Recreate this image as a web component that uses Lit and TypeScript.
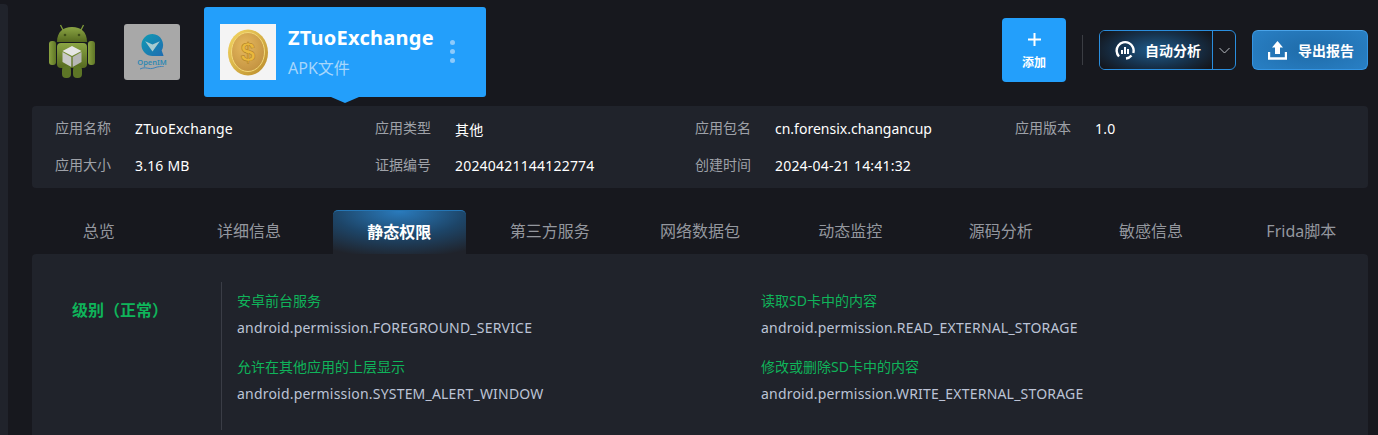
import { LitElement, html, css } from "lit";
import { customElement } from "lit/decorators.js";

const info = [
  ["应用名称", "ZTuoExchange"], ["应用类型", "其他"], ["应用包名", "cn.forensix.changancup"], ["应用版本", "1.0"],
  ["应用大小", "3.16 MB"], ["证据编号", "20240421144122774"], ["创建时间", "2024-04-21 14:41:32"],
];
const tabs = ["总览", "详细信息", "静态权限", "第三方服务", "网络数据包", "动态监控", "源码分析", "敏感信息", "Frida脚本"];
const perms = [
  ["安卓前台服务", "android.permission.FOREGROUND_SERVICE"],
  ["读取SD卡中的内容", "android.permission.READ_EXTERNAL_STORAGE"],
  ["允许在其他应用的上层显示", "android.permission.SYSTEM_ALERT_WINDOW"],
  ["修改或删除SD卡中的内容", "android.permission.WRITE_EXTERNAL_STORAGE"],
];

@customElement("app-root")
export class AppRoot extends LitElement {
  static styles = css`
    :host { display: block; width: 1378px; height: 435px; overflow: hidden; background: #17181e;
      font-family: "Noto Sans", "Noto Sans CJK SC", sans-serif; color: #fff; }
    .app { display: flex; height: 435px; }
    .rail { flex: 0 0 8px; background: #20232b; border-top-right-radius: 4px; margin-top: 4px; }
    .main { flex: 0 0 1360px; padding-left: 24px; box-sizing: border-box; }
    .header { display: flex; align-items: flex-start; height: 106px; }
    .android { width: 48px; height: 56px; margin: 24px 0 0 16px; }
    .openim { width: 56px; height: 56px; margin: 24px 0 0 28px; background: #a8a8a8; border-radius: 3px;
      display: flex; flex-direction: column; align-items: center; padding-top: 10px; box-sizing: border-box; }
    .openim span { font-size: 7.5px; line-height: 8px; color: #2f88b4; font-weight: 600; margin-top: 2px; }
    .card { position: relative; width: 282px; height: 90px; margin: 7px 0 0 24px; background: #239ffb; border-radius: 3px;
      display: flex; align-items: center; padding-left: 16px; box-sizing: border-box; }
    .card::after { content: ""; position: absolute; left: 127px; top: 90px; border: 14px solid transparent;
      border-top: 6px solid #239ffb; border-bottom: 0; }
    .coin { width: 56px; height: 56px; background: #f4f4f4; flex: none; }
    .card-text { margin-left: 12px; }
    .card-title { font-size: 20px; line-height: 28px; font-weight: 700; letter-spacing: .25px; margin-top: -1px; }
    .card-sub { font-size: 16px; line-height: 24px; color: #a6d6fb; margin-top: 4px; }
    .dots { display: flex; flex-direction: column; gap: 4px; margin-left: 16px; margin-top: -2px; }
    .dots i { width: 5px; height: 5px; border-radius: 50%; background: #8ccafb; }
    .actions { display: flex; align-items: center; margin-left: auto; height: 64px; margin-top: 18px; }
    .add { width: 64px; height: 64px; background: #239ffb; border-radius: 4px; display: flex; flex-direction: column;
      align-items: center; font-size: 12px; font-weight: 700; }
    .add svg { margin-top: 15px; }
    .add span { line-height: 16px; margin-top: 9px; }
    .sep { width: 1px; height: 30px; background: #3b3d43; margin: 0 16px; }
    .split { display: flex; width: 137px; height: 40px; box-sizing: border-box; border: 1px solid #2a8ede; border-radius: 6px; overflow: hidden; }
    .split-main { flex: 0 0 113px; display: flex; align-items: center; padding-left: 15px; box-sizing: border-box;
      border-right: 1px solid #2a8ede; font-size: 14px; font-weight: 700; gap: 10px;
      background: radial-gradient(ellipse 60% 75% at 50% 50%, #1f5c8c 0%, #163049 60%, #14161c 100%); }
    .split-arrow { flex: 1; display: flex; align-items: center; justify-content: center; }
    .export { width: 116px; height: 40px; margin-left: 16px; box-sizing: border-box; border: 1px solid #3595e3; border-top-color: #4aa3e8; border-radius: 6px;
      display: flex; align-items: center; padding-left: 15px; gap: 11px; font-size: 14px; font-weight: 700;
      background: radial-gradient(ellipse 70% 90% at 50% 50%, #1f6ba8 0%, #2a82c8 100%); }
    .info { display: grid; grid-template-columns: repeat(4, 320px); height: 82px; align-content: start; padding: 4px 0 0 23px; box-sizing: border-box;
      background: #20232b; border-radius: 4px; }
    .kv { display: flex; height: 37px; align-items: center; font-size: 14px; letter-spacing: .2px; }
    .kv.tight { letter-spacing: 0; }
    .kv b { flex: 0 0 80px; font-weight: 400; font-size: 14px; line-height: 20px; margin-top: -1px; letter-spacing: 0; color: #9ea1a8; }
    .tabs { display: flex; justify-content: space-between; height: 44px; margin-top: 22px; }
    .tab { flex: 0 0 133.33px; display: flex; align-items: center; justify-content: center; font-size: 16px; line-height: 24px; color: #94979e; box-sizing: border-box; padding-bottom: 2px; }
    .tab.on { color: #fff; font-weight: 700; border-top: 1px solid #2576b5; border-radius: 5px 5px 0 0;
      background: radial-gradient(ellipse 90% 110% at 50% 0%, #2a7bbd 0%, #1d4568 55%, #20232b 100%); }
    .panel { display: flex; height: 181px; padding-top: 28px; box-sizing: border-box; background: #20232b; border-radius: 4px 4px 0 0; }
    .level { flex: 0 0 189px; box-sizing: border-box; padding: 16px 0 0 40px; font-size: 16px; line-height: 24px; font-weight: 700; color: #0fb45a; }
    .list { flex: 1; border-left: 1px solid #3a3d46; padding-left: 15px; height: 148px;
      display: grid; grid-template-columns: 524px 1fr; grid-auto-rows: 66px; }
    .perm { display: flex; flex-direction: column; }
    .perm .t { font-size: 14px; line-height: 20px; color: #0fb45a; margin-top: 9px; }
    .perm .v { font-size: 14px; line-height: 20px; letter-spacing: .2px; color: #bcc3d6; margin-top: 7px; }
  `;

  render() {
    return html`<div class="app">
      <div class="rail"></div>
      <div class="main">
        <div class="header">
          <svg class="android" viewBox="0 0 48 56">
            <defs>
              <linearGradient id="g" x1="0" y1="0" x2="0" y2="1"><stop offset="0" stop-color="#8ba544"/><stop offset="1" stop-color="#55691f"/></linearGradient>
              <linearGradient id="a" x1="0" y1="0" x2="1" y2="0"><stop offset="0" stop-color="#8aa240"/><stop offset="1" stop-color="#5e7526"/></linearGradient>
            </defs>
            <path d="M15 6 12.500 1M33 6 35.500 1" stroke="#7f9a3a" stroke-width="1.300" fill="none"/>
            <path d="M9 18C9 8 15 3 24 3s15 5 15 15Z" fill="url(#g)"/>
            <circle cx="17" cy="11" r="1.300" fill="#3f4f19"/><circle cx="31" cy="11" r="1.300" fill="#3f4f19"/>
            <rect x="9" y="19" width="30" height="25" rx="4" fill="url(#g)"/>
            <rect x="1" y="17" width="7" height="24" rx="3" fill="url(#a)"/>
            <rect x="40" y="17" width="7" height="24" rx="3" fill="url(#a)"/>
            <rect x="14" y="42" width="9" height="12" rx="4" fill="#5d7526"/>
            <rect x="25" y="42" width="9" height="12" rx="4" fill="#5d7526"/>
            <path d="M24 22 33.500 27 24 32 14.500 27Z" fill="#e6e6e6"/>
            <path d="M14.500 28 23.300 33V43L14.500 38Z" fill="#c9c9c9"/>
            <path d="M33.500 28 24.700 33V43L33.500 38Z" fill="#b6b6b6"/>
          </svg>
          <div class="openim">
            <svg width="23" height="22" viewBox="0 0 24 24">
              <defs><linearGradient id="o" x1="0" y1="0" x2="1" y2="1"><stop offset="0" stop-color="#0f9bb4"/><stop offset="1" stop-color="#1f6cb0"/></linearGradient></defs>
              <path d="M12 0a12 12 0 1 0 0 24h11.500a.5.5 0 0 0 .4-.8L22 18a12 12 0 0 0-10-18Z" fill="url(#o)"/>
              <path d="M4 8 12 11.500 20 8 12 19Z" fill="#a8cbd0"/>
            </svg>
            <span>OpenIM</span>
            <svg width="26" height="4" viewBox="0 0 26 4"><path d="M1 3C7 0 10 4 15 2s6-1 10-2" stroke="#3a82b8" fill="none"/></svg>
          </div>
          <div class="card">
            <svg class="coin" viewBox="0 0 56 56">
              <defs>
                <radialGradient id="c1" cx=".4" cy=".35" r=".75"><stop offset="0" stop-color="#e6b95e"/><stop offset="1" stop-color="#c08f3e"/></radialGradient>
                <linearGradient id="c2" x1="0" y1="0" x2="1" y2="1"><stop offset="0" stop-color="#f6d964"/><stop offset="1" stop-color="#b98a2a"/></linearGradient>
              </defs>
              <ellipse cx="28" cy="28.500" rx="20" ry="23" fill="url(#c2)"/>
              <ellipse cx="28" cy="28" rx="16.500" ry="19.500" fill="url(#c1)" stroke="#f3d878" stroke-width="1"/>
              <text x="28" y="37" text-anchor="middle" font-family="Liberation Sans" font-weight="700" font-size="26" fill="#eab83c" stroke="#a87a26" stroke-width=".5">$</text>
            </svg>
            <div class="card-text">
              <div class="card-title">ZTuoExchange</div>
              <div class="card-sub">APK文件</div>
            </div>
            <div class="dots"><i></i><i></i><i></i></div>
          </div>
          <div class="actions">
            <div class="add">
              <svg width="13" height="13" viewBox="0 0 13 13"><path d="M6.500 0v13M0 6.500h13" stroke="#fff" stroke-width="2"/></svg>
              <span>添加</span>
            </div>
            <div class="sep"></div>
            <div class="split">
              <div class="split-main">
                <svg width="20" height="20" viewBox="0 0 20 20">
                  <path d="M4 16.500A8.500 8.500 0 1 1 18.300 13" fill="none" stroke="#fff" stroke-width="2.400"/>
                  <path d="M16.500 15.500A8.500 8.500 0 0 1 11 18.500" fill="none" stroke="#fff" stroke-width="2.400"/>
                  <path d="M6 10h2v4H6ZM9 7h2v7H9ZM12 9h2v5h-2Z" fill="#fff"/>
                </svg>
                <span>自动分析</span>
              </div>
              <div class="split-arrow">
                <svg width="11" height="7" viewBox="0 0 11 7"><path d="M.5 1 5.500 6l5-5" fill="none" stroke="#b9bcc2" stroke-width="1"/></svg>
              </div>
            </div>
            <div class="export">
              <svg width="19" height="19" viewBox="0 0 19 19">
                <path d="M9.500 0 15 6.500H12V13H7V6.500H4Z" fill="#fff"/>
                <path d="M1 11v6.500h17V11" fill="none" stroke="#fff" stroke-width="2.400"/>
              </svg>
              <span>导出报告</span>
            </div>
          </div>
        </div>
        <div class="info">
          ${info.map(([k, v]) => html`<div class="kv ${v.startsWith("cn.") ? "tight" : ""}"><b>${k}</b><span>${v}</span></div>`)}
        </div>
        <div class="tabs">
          ${tabs.map((t, i) => html`<div class="tab ${i === 2 ? "on" : ""}">${t}</div>`)}
        </div>
        <div class="panel">
          <div class="level">级别（正常）</div>
          <div class="list">
            ${perms.map(([t, v]) => html`<div class="perm"><div class="t">${t}</div><div class="v">${v}</div></div>`)}
          </div>
        </div>
      </div>
    </div>`;
  }
}
